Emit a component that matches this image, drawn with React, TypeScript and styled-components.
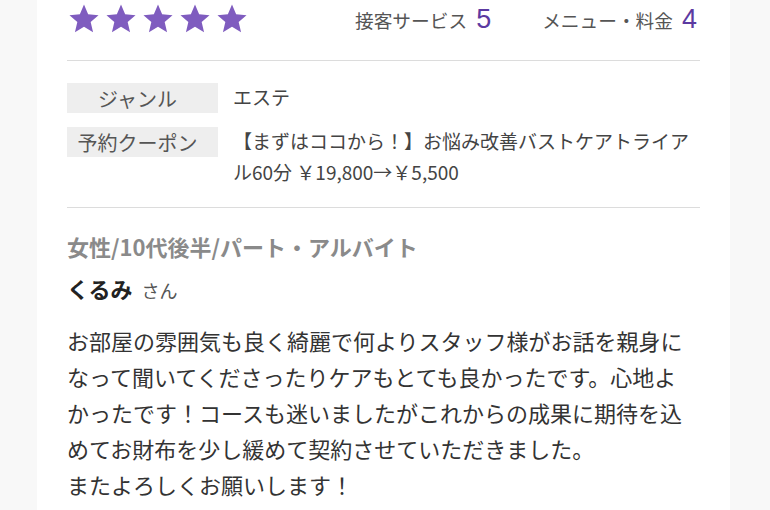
import React from 'react';
import styled, {createGlobalStyle} from 'styled-components';

const GlobalStyle = createGlobalStyle`
  html, body {
    margin: 0;
    padding: 0;
    background: #f8f8f8;
  }
  body {
    font-family: "Noto Sans CJK JP", "Noto Sans", sans-serif;
  }
`;

const Page = styled.div`
  display: flex;
  justify-content: center;
  width: 770px;
  height: 510px;
  overflow: hidden;
`;

const Card = styled.div`
  width: 693px;
  margin-left: -3px;
  background: #fff;
  padding: 0 30px;
  box-sizing: border-box;
`;

const RatingBar = styled.div`
  display: flex;
  align-items: center;
  height: 38px;
  border-bottom: 1px solid #dcdcdc;
  padding-bottom: 22px;
  margin-bottom: 22px;
`;

const Stars = styled.div`
  display: flex;
  gap: 5px;
  margin-left: 1px;
  margin-top: -1px;
`;

const Star = styled.svg`
  width: 32px;
  height: 32px;
  fill: #7f5cbf;
`;

const Scores = styled.div`
  display: flex;
  align-items: center;
  margin-left: auto;
  gap: 51px;
  margin-right: 3px;
`;

const Score = styled.div`
  display: flex;
  align-items: center;
  gap: 9px;
  font-size: 18.7px;
  color: #555;
`;

const ScoreValue = styled.span`
  font-family: "Liberation Sans", Arial, sans-serif;
  font-size: 27px;
  color: #5c3aa1;
  line-height: 1;
`;

const InfoTable = styled.div`
  display: flex;
  flex-direction: column;
  gap: 14px;
  padding-bottom: 20px;
  border-bottom: 1px solid #dcdcdc;
`;

const InfoRow = styled.div`
  display: flex;
  align-items: flex-start;
  gap: 15px;
`;

const Label = styled.div`
  flex: 0 0 151px;
  height: 30px;
  display: flex;
  align-items: center;
  justify-content: center;
  padding-right: 10px;
  box-sizing: border-box;
  background: #eeeeee;
  color: #555;
  font-size: 20px;
`;

const Value = styled.div`
  flex: 1;
  color: #444;
  font-size: 19px;
  line-height: 31px;
  margin-top: -2px;
  text-spacing-trim: space-all;
`;

const Reviewer = styled.div`
  padding-top: 23px;
`;

const Profile = styled.div`
  font-size: 22px;
  font-weight: 700;
  color: #8a8a8a;
  line-height: 30px;
`;

const Name = styled.div`
  margin-top: 12px;
  font-size: 22px;
  font-weight: 700;
  color: #222;
  line-height: 30px;
`;

const Honorific = styled.span`
  margin-left: 9px;
  font-size: 18px;
  font-weight: 400;
  color: #555;
`;

const Body = styled.p`
  margin: 17px 0 0;
  padding-right: 12px;
  font-size: 22px;
  line-height: 36px;
  color: #333;
  text-spacing-trim: space-all;
`;

const StarIcon = () => (
  <Star viewBox="0 0 24 24">
    <path d="M12 1.2l3.1 7.2 7.8.7-5.9 5.2 1.8 7.7L12 17.9 5.2 22l1.8-7.7L1.1 9.1l7.8-.7z" />
  </Star>
);

const App = () => {
  return (
    <>
      <GlobalStyle />
      <Page>
        <Card>
          <RatingBar>
            <Stars>
              {[0, 1, 2, 3, 4].map((i) => (
                <StarIcon key={i} />
              ))}
            </Stars>
            <Scores>
              <Score>
                接客サービス<ScoreValue>5</ScoreValue>
              </Score>
              <Score>
                メニュー・料金<ScoreValue>4</ScoreValue>
              </Score>
            </Scores>
          </RatingBar>
          <InfoTable>
            <InfoRow>
              <Label>ジャンル</Label>
              <Value>エステ</Value>
            </InfoRow>
            <InfoRow>
              <Label>予約クーポン</Label>
              <Value>【まずはココから！】お悩み改善バストケアトライアル60分 ￥19,800→￥5,500</Value>
            </InfoRow>
          </InfoTable>
          <Reviewer>
            <Profile>女性/10代後半/パート・アルバイト</Profile>
            <Name>
              くるみ<Honorific>さん</Honorific>
            </Name>
            <Body>
              お部屋の雰囲気も良く綺麗で何よりスタッフ様がお話を親身になって聞いてくださったりケアもとても良かったです。心地よかったです！コースも迷いましたがこれからの成果に期待を込めてお財布を少し緩めて契約させていただきました。
              <br />
              またよろしくお願いします！
            </Body>
          </Reviewer>
        </Card>
      </Page>
    </>
  );
};

export default App;
